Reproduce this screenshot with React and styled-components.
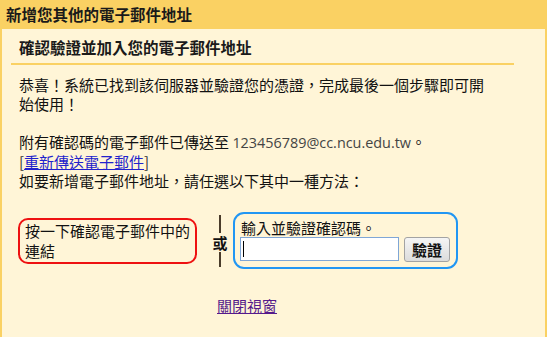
import React from "react"
import styled, { createGlobalStyle } from "styled-components"

const yellow = "#fad163"
const cream = "#fff5d7"
const cjk = `"Noto Sans CJK TC", "Noto Sans", sans-serif`

const GlobalStyle = createGlobalStyle`
  html, body {
    margin: 0;
    padding: 0;
    background: ${cream};
  }
  body {
    font-family: ${cjk};
    color: #111;
  }
`

const Page = styled.div`
  width: 547px;
  height: 337px;
  display: flex;
  flex-direction: column;
  overflow: hidden;
`

const Header = styled.div`
  height: 29px;
  line-height: 29px;
  padding-left: 6px;
  background: ${yellow};
  font-size: 15.5px;
  font-weight: 700;
  color: #1a1a1a;
`

const Panel = styled.div`
  flex: 1;
  background: ${cream};
  border-left: 2px solid ${yellow};
  border-right: 2px solid ${yellow};
`

const SubTitle = styled.div`
  margin: 0 31px 0 9px;
  padding: 4px 0 0 8px;
  height: 30px;
  line-height: 28px;
  border-bottom: 2px solid ${yellow};
  font-size: 15.5px;
  font-weight: 700;
  color: #1a1a1a;
`

const Body = styled.div`
  padding: 10px 0 0 17px;
  width: 472px;
  font-size: 15px;
  line-height: 19px;
`

const Email = styled.span`
  font-family: "Open Sans", "DejaVu Sans", sans-serif;
  font-size: 14.4px;
  color: #444;
`

const Bracket = styled.span`
  color: #333;
`

const Link = styled.a`
  color: ${(props) => (props.$visited ? "#551a8b" : "#2222cc")};
  text-decoration: underline;
  cursor: pointer;
`

const Options = styled.div`
  display: flex;
  align-items: center;
  margin: 22px 0 0 -1px;
`

const ClickBox = styled.div`
  width: 165px;
  padding: 1px 5px;
  border: 2px solid #ee1111;
  border-radius: 10px;
  line-height: 20px;
`

const Divider = styled.div`
  width: 16px;
  margin: 0 5px 0 15px;
  display: flex;
  flex-direction: column;
  align-items: center;
`

const Rule = styled.div`
  width: 2px;
  height: ${(props) => props.$h}px;
  background: #4a3c2a;
`

const Or = styled.div`
  font-weight: 700;
  font-size: 15px;
  line-height: 19px;
`

const CodeBox = styled.div`
  width: 211px;
  padding: 4px 5px 5px;
  border: 2px solid #2196f3;
  border-radius: 11px;
`

const Label = styled.div`
  padding-left: 1px;
  line-height: 19px;
`

const InputRow = styled.div`
  display: flex;
  gap: 5px;
`

const Field = styled.div`
  position: relative;
  width: 159px;
  height: 24px;

  &::after {
    content: "";
    position: absolute;
    left: 3px;
    top: 4px;
    width: 1px;
    height: 16px;
    background: #000;
  }
`

const Input = styled.input`
  box-sizing: border-box;
  width: 100%;
  height: 100%;
  margin: 0;
  border: 1px solid #7fa6d6;
  background: #fff;
  outline: none;
`

const Button = styled.button`
  box-sizing: border-box;
  width: 46px;
  height: 25px;
  margin: 0;
  padding: 0;
  border: 1px solid #a3a3a3;
  border-radius: 3px;
  background: linear-gradient(#f5f5f5, #dcdcdc);
  font-family: ${cjk};
  font-size: 15px;
  font-weight: 700;
  line-height: 21px;
  color: #111;
`

const Footer = styled.div`
  margin: 27px 0 0 215px;
  font-size: 15px;
  line-height: 19px;
`

export default function App() {
  return (
    <>
      <GlobalStyle />
      <Page>
        <Header>新增您其他的電子郵件地址</Header>
        <Panel>
          <SubTitle>確認驗證並加入您的電子郵件地址</SubTitle>
          <Body>
            恭喜！系統已找到該伺服器並驗證您的憑證，完成最後一個步驟即可開始使用！
            <br />
            <br />
            附有確認碼的電子郵件已傳送至 <Email>123456789@cc.ncu.edu.tw</Email>。
            <br />
            <Bracket>[</Bracket>
            <Link>重新傳送電子郵件</Link>
            <Bracket>]</Bracket>
            <br />
            如要新增電子郵件地址，請任選以下其中一種方法：
            <Options>
              <ClickBox>按一下確認電子郵件中的連結</ClickBox>
              <Divider>
                <Rule $h={18} />
                <Or>或</Or>
                <Rule $h={15} />
              </Divider>
              <CodeBox>
                <Label>輸入並驗證確認碼。</Label>
                <InputRow>
                  <Field>
                    <Input type="text" />
                  </Field>
                  <Button>驗證</Button>
                </InputRow>
              </CodeBox>
            </Options>
          </Body>
          <Footer>
            <Link $visited>關閉視窗</Link>
          </Footer>
        </Panel>
      </Page>
    </>
  )
}
